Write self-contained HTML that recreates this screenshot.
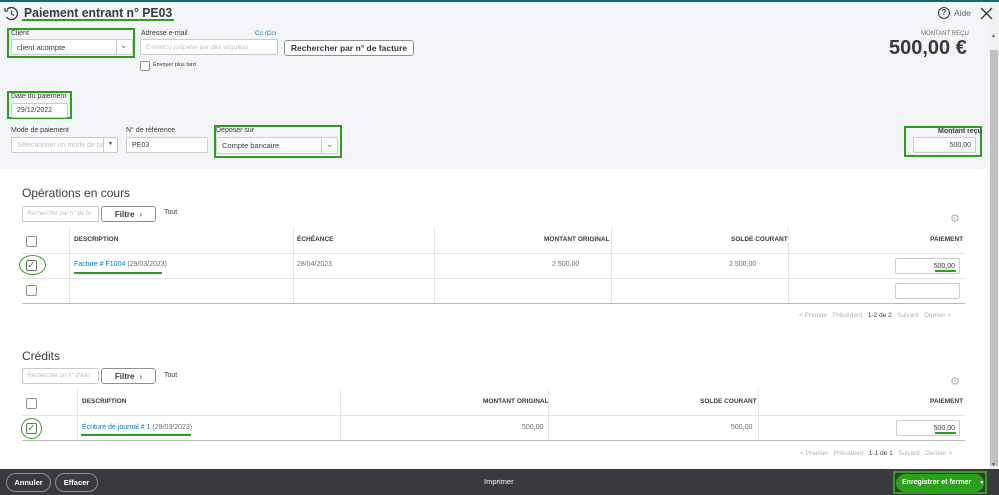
<!DOCTYPE html>
<html><head><meta charset="utf-8"><style>
*{box-sizing:border-box;margin:0;padding:0}
body{width:999px;height:495px;overflow:hidden;position:relative;background:#fff;font-family:"Liberation Sans",sans-serif;color:#393a3d}
.a{position:absolute;white-space:nowrap}
.hdr{position:absolute;left:0;top:0;width:989px;height:169px;background:#f4f5f8}
.lbl{font-size:7px;color:#393a3d}
.inp{position:absolute;background:#fff;border:1px solid #c9cbcf;border-radius:2px;font-size:7.5px;color:#393a3d;padding-left:5px;display:flex;align-items:center}
.gb{position:absolute;border:2px solid #2ca01c}
.th{font-size:6.5px;font-weight:bold;color:#393a3d}
.td{font-size:7px;color:#6b6c72}
.vl{position:absolute;width:1px;background:#e3e5e8}
.hl{position:absolute;height:1px;background:#e3e5e8}
.cb{position:absolute;width:11px;height:11px;border:1px solid #8d9096;border-radius:2px;background:#fff}
.btn{position:absolute;border:1px solid #8d9096;border-radius:3px;background:#fff;font-size:8px;font-weight:bold;display:flex;align-items:center;justify-content:center}
.link{color:#0077c5}
</style></head><body>
<div class="hdr"></div>
<div class="a" style="left:0;top:0;width:999px;height:2px;background:#0d6e6e"></div>
<!-- scrollbar -->
<div class="a" style="left:989px;top:2px;width:10px;height:468px;background:#f1f1f1"></div>
<div class="a" style="left:990px;top:50px;width:8px;height:416px;background:#c1c1c1"></div>
<div class="a" style="left:991px;top:33px;font-size:5px;color:#555">▲</div>
<div class="a" style="left:991px;top:462px;font-size:5px;color:#555">▼</div>

<!-- title -->
<svg class="a" style="left:4px;top:6px" width="15" height="15" viewBox="0 0 15 15"><path d="M3 3.5A6 6 0 1 1 2.5 11" fill="none" stroke="#393a3d" stroke-width="1.3"/><path d="M1 2v3h3" fill="none" stroke="#393a3d" stroke-width="1.2"/><path d="M7.5 4.5v3.5l2.5 1.5" fill="none" stroke="#393a3d" stroke-width="1.2"/></svg>
<div class="a" style="left:24px;top:5px;font-size:13px;font-weight:bold;color:#393a3d;transform:scaleX(0.94);transform-origin:left">Paiement entrant n° PE03</div>
<div class="a" style="left:22px;top:19px;width:152px;height:2px;background:#2ca01c"></div>

<div class="gb" style="left:7px;top:28px;width:128px;height:30px"></div>
<div class="a lbl" style="left:11px;top:30px">Client</div>
<div class="inp" style="left:11px;top:39px;width:122px;height:16px">client acompte</div>
<div class="a" style="left:116px;top:40px;width:1px;height:14px;background:#c9cbcf"></div>
<div class="a" style="left:120px;top:40px;font-size:9px;color:#6b6c72">⌄</div>

<div class="a lbl" style="left:141px;top:30px">Adresse e-mail</div>
<div class="a" style="left:255px;top:30px;font-size:6.5px;color:#0077c5">Cc /Cci</div>
<div class="inp" style="left:140px;top:39px;width:138px;height:16px;color:#babec5;font-style:italic;font-size:6.5px">E-mail(s) (séparer par des virgules)</div>
<div class="btn" style="left:284px;top:40px;width:130px;height:16px;font-size:8.5px">Rechercher par n° de facture</div>
<div class="cb" style="left:140px;top:61px;width:10px;height:10px"></div>
<div class="a" style="left:153px;top:62px;font-size:5.5px">Envoyer plus tard</div>

<div class="gb" style="left:7px;top:91px;width:65px;height:28px"></div>
<div class="a lbl" style="left:11px;top:93px">Date du paiement</div>
<div class="inp" style="left:11px;top:103px;width:57px;height:15px;font-size:7px">29/12/2022</div>

<div class="a lbl" style="left:11px;top:127px">Mode de paiement</div>
<div class="inp" style="left:11px;top:137px;width:107px;height:16px;color:#babec5;font-size:7px">Sélectionner un mode de pa</div>
<div class="a" style="left:103px;top:138px;width:1px;height:14px;background:#c9cbcf"></div>
<div class="a" style="left:108px;top:141px;font-size:5px">▼</div>
<div class="a lbl" style="left:126px;top:127px">N° de référence</div>
<div class="inp" style="left:126px;top:137px;width:82px;height:16px;font-size:7px">PE03</div>
<div class="gb" style="left:214px;top:125px;width:128px;height:33px"></div>
<div class="a lbl" style="left:216px;top:127px">Déposer sur</div>
<div class="inp" style="left:216px;top:137px;width:122px;height:17px">Compte bancaire</div>
<div class="a" style="left:321px;top:138px;width:1px;height:15px;background:#c9cbcf"></div>
<div class="a" style="left:326px;top:139px;font-size:9px;color:#6b6c72">⌄</div>

<!-- right header -->
<div class="a" style="left:938px;top:7px;width:12px;height:12px;border:1.3px solid #393a3d;border-radius:50%;font-size:8px;font-weight:bold;text-align:center;line-height:10px">?</div>
<div class="a" style="left:954px;top:8px;font-size:8.5px;color:#6b6c72">Aide</div>
<svg class="a" style="left:980px;top:7px" width="13" height="13"><path d="M1 1L12 12M12 1L1 12" stroke="#393a3d" stroke-width="1.4"/></svg>
<div class="a" style="left:921px;top:31px;font-size:6px;color:#6b6c72">MONTANT REÇU</div>
<div class="a" style="left:889px;top:37px;font-size:20px;font-weight:bold;color:#393a3d">500,00 €</div>
<div class="gb" style="left:904px;top:126px;width:78px;height:31px"></div>
<div class="a" style="left:938px;top:128px;font-size:7px;font-weight:bold">Montant reçu</div>
<div class="inp" style="left:913px;top:137px;width:63px;height:16px;justify-content:flex-end;padding-right:4px;font-size:7px">500,00</div>

<!-- Opérations -->
<div class="a" style="left:22px;top:186px;font-size:12px">Opérations en cours</div>
<div class="inp" style="left:22px;top:206px;width:77px;height:16px;color:#babec5;font-size:6px;font-style:italic;padding-left:4px">Rechercher par n° de fa</div>
<div class="btn" style="left:101px;top:206px;width:55px;height:16px">Filtre <span style="color:#0077c5;margin-left:5px">›</span></div>
<div class="a" style="left:164px;top:209px;font-size:7px">Tout</div>
<div class="a" style="left:950px;top:212px;font-size:11px;color:#b0b2b8">⚙</div>

<div class="vl" style="left:69px;top:227px;height:76px"></div>
<div class="vl" style="left:293px;top:227px;height:76px"></div>
<div class="vl" style="left:434px;top:227px;height:76px"></div>
<div class="vl" style="left:611px;top:227px;height:76px"></div>
<div class="vl" style="left:788px;top:227px;height:76px"></div>
<div class="hl" style="left:22px;top:253px;width:943px"></div>
<div class="hl" style="left:22px;top:278px;width:943px"></div>
<div class="hl" style="left:22px;top:303px;width:943px;background:#b8bac0"></div>
<div class="cb" style="left:26px;top:236px"></div>
<div class="a th" style="left:74px;top:236px">DESCRIPTION</div>
<div class="a th" style="left:297px;top:236px">ÉCHÉANCE</div>
<div class="a th" style="left:544px;top:236px">MONTANT ORIGINAL</div>
<div class="a th" style="left:731px;top:236px">SOLDE COURANT</div>
<div class="a th" style="left:930px;top:236px">PAIEMENT</div>
<div class="a" style="left:19px;top:255px;width:27px;height:20px;border:1.5px solid #2ca01c;border-radius:50%"></div>
<div class="cb" style="left:26px;top:260px;border-color:#6b6c72;font-size:10px;color:#2ca01c;line-height:9px;text-align:center">✓</div>
<div class="a td" style="left:74px;top:261px"><span class="link">Facture # F1004</span> (29/03/2023)</div>
<div class="a" style="left:74px;top:272px;width:88px;height:2px;background:#2ca01c"></div>
<div class="a td" style="left:297px;top:261px">28/04/2023</div>
<div class="a td" style="left:552px;top:261px">2 500,00</div>
<div class="a td" style="left:729px;top:261px">2 500,00</div>
<div class="inp" style="left:895px;top:258px;width:65px;height:16px;justify-content:flex-end;padding-right:4px;font-size:7px">500,00</div>
<div class="a" style="left:935px;top:270px;width:21px;height:2px;background:#2ca01c"></div>
<div class="cb" style="left:26px;top:285px"></div>
<div class="inp" style="left:895px;top:283px;width:65px;height:16px"></div>
<div class="a" style="left:799px;top:312px;font-size:6.5px;color:#b0b2b8">&lt; Premier &nbsp; Précédent &nbsp; <span style="color:#393a3d">1-2 de 2</span> &nbsp; Suivant &nbsp; Dernier &gt;</div>

<!-- Crédits -->
<div class="a" style="left:22px;top:349px;font-size:12px">Crédits</div>
<div class="inp" style="left:22px;top:368px;width:77px;height:16px;color:#babec5;font-size:6px;font-style:italic;padding-left:4px">Rechercher un n° d'avo</div>
<div class="btn" style="left:101px;top:368px;width:55px;height:16px">Filtre <span style="color:#0077c5;margin-left:5px">›</span></div>
<div class="a" style="left:164px;top:372px;font-size:7px">Tout</div>
<div class="a" style="left:950px;top:375px;font-size:11px;color:#b0b2b8">⚙</div>
<div class="vl" style="left:77px;top:389px;height:52px"></div>
<div class="vl" style="left:340px;top:389px;height:52px"></div>
<div class="vl" style="left:548px;top:389px;height:52px"></div>
<div class="vl" style="left:758px;top:389px;height:52px"></div>
<div class="hl" style="left:22px;top:415px;width:943px"></div>
<div class="hl" style="left:22px;top:440px;width:943px;background:#b8bac0"></div>
<div class="cb" style="left:26px;top:398px"></div>
<div class="a th" style="left:82px;top:398px">DESCRIPTION</div>
<div class="a th" style="left:483px;top:398px">MONTANT ORIGINAL</div>
<div class="a th" style="left:700px;top:398px">SOLDE COURANT</div>
<div class="a th" style="left:930px;top:398px">PAIEMENT</div>
<div class="a" style="left:21px;top:418px;width:21px;height:21px;border:1.5px solid #2ca01c;border-radius:50%"></div>
<div class="cb" style="left:26px;top:423px;border-color:#6b6c72;font-size:10px;color:#2ca01c;line-height:9px;text-align:center">✓</div>
<div class="a td" style="left:82px;top:424px"><span class="link">Écriture de journal # 1</span> (29/03/2023)</div>
<div class="a" style="left:81px;top:434px;width:110px;height:2px;background:#2ca01c"></div>
<div class="a td" style="left:522px;top:424px">500,00</div>
<div class="a td" style="left:731px;top:424px">500,00</div>
<div class="inp" style="left:896px;top:420px;width:64px;height:16px;justify-content:flex-end;padding-right:4px;font-size:7px">500,00</div>
<div class="a" style="left:935px;top:432px;width:21px;height:2px;background:#2ca01c"></div>
<div class="a" style="left:800px;top:450px;font-size:6.5px;color:#b0b2b8">&lt; Premier &nbsp; Précédent &nbsp; <span style="color:#393a3d">1-1 de 1</span> &nbsp; Suivant &nbsp; Dernier &gt;</div>

<!-- footer -->
<div class="a" style="left:0;top:469px;width:999px;height:26px;background:#393a3d"></div>
<div class="a" style="left:6px;top:473px;width:45px;height:19px;border:1px solid #8d9096;border-radius:10px;color:#fff;font-size:7.5px;font-weight:bold;text-align:center;line-height:17px">Annuler</div>
<div class="a" style="left:55px;top:473px;width:43px;height:19px;border:1px solid #8d9096;border-radius:10px;color:#fff;font-size:7.5px;font-weight:bold;text-align:center;line-height:17px">Effacer</div>
<div class="a" style="left:484px;top:477px;font-size:7.5px;color:#fff">Imprimer</div>
<div class="a" style="left:893px;top:471px;width:94px;height:23px;border:2px solid #2ca01c"></div>
<div class="a" style="left:896px;top:474px;width:88px;height:18px;background:#2ca01c;border-radius:9px;color:#fff;font-size:7px;font-weight:bold;line-height:18px;padding-left:6px">Enregistrer et fermer <span style="margin-left:6px;font-size:5px">▼</span></div>
</body></html>
